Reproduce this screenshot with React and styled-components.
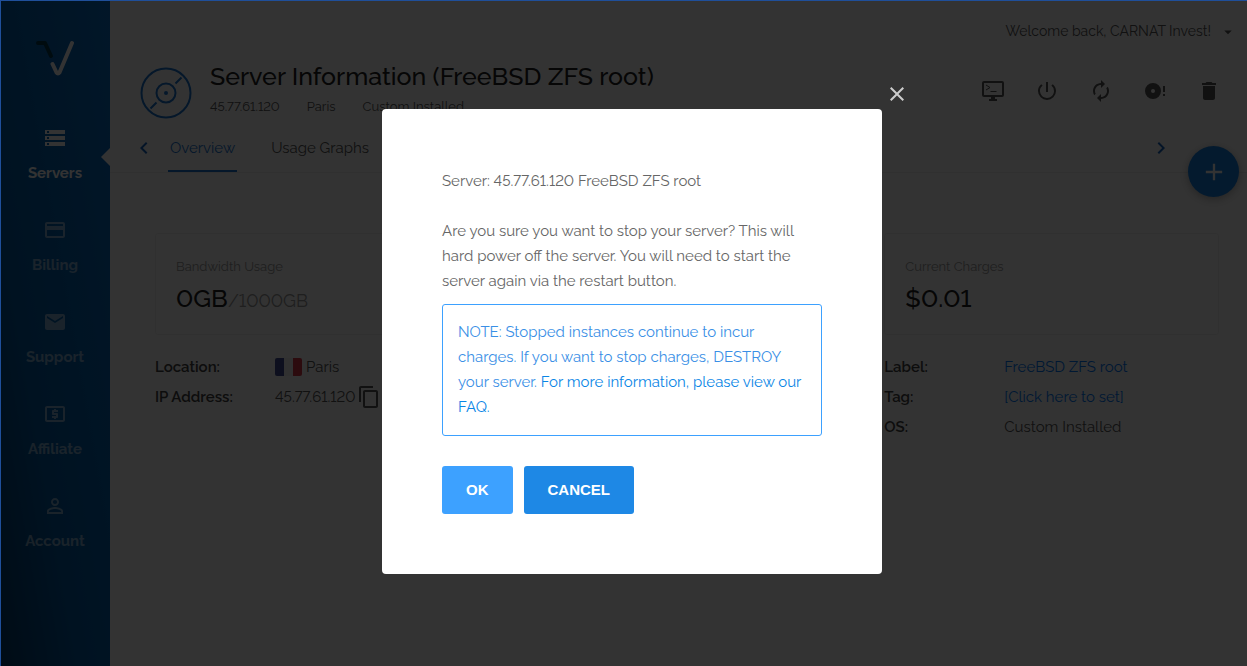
import React, { useState } from "react";
import styled, { createGlobalStyle } from "styled-components";
import {
  MdAdd,
  MdArrowDropDown,
  MdAutorenew,
  MdChevronLeft,
  MdChevronRight,
  MdClose,
  MdContentCopy,
  MdDelete,
  MdLocalAtm,
  MdMail,
  MdPayment,
  MdPersonOutline,
  MdPowerSettingsNew,
  MdStorage,
} from "react-icons/md";

const navItems = [
  { label: "Servers", icon: MdStorage },
  { label: "Billing", icon: MdPayment },
  { label: "Support", icon: MdMail },
  { label: "Affiliate", icon: MdLocalAtm },
  { label: "Account", icon: MdPersonOutline },
];

function Logo() {
  return (
    <svg width="38" height="36" viewBox="0 0 38 36" fill="none">
      <path
        d="M2 3h7l6 13"
        stroke="#00384d"
        strokeWidth="4"
        strokeLinecap="round"
        strokeLinejoin="round"
      />
      <path
        d="M16.500 24l4 8.500q1.500 2 3 0L36 3"
        stroke="#fff"
        strokeWidth="4"
        strokeLinecap="round"
        strokeLinejoin="round"
      />
    </svg>
  );
}

function DiscIcon() {
  return (
    <svg
      width="52"
      height="52"
      viewBox="0 0 52 52"
      fill="none"
      stroke="#1976d2"
      strokeWidth="2"
    >
      <circle cx="26" cy="26" r="24.500" />
      <circle cx="26" cy="26" r="9.500" />
      <circle cx="26" cy="26" r="2" fill="#1976d2" stroke="none" />
      <path d="M35.500 16.500l6-6M16.500 35.500l-6 6" />
    </svg>
  );
}

function ConsoleIcon() {
  return (
    <svg width="24" height="24" viewBox="0 0 24 24" fill="none">
      <rect
        x="2"
        y="3"
        width="20"
        height="14"
        rx="1"
        stroke="currentColor"
        strokeWidth="2"
      />
      <path d="M10 17h4v3h2v2H8v-2h2z" fill="currentColor" />
      <path d="M5 6l4 2.500-4 2.500M9.500 12.500h6" stroke="currentColor" />
    </svg>
  );
}

function ReinstallIcon() {
  return (
    <svg width="24" height="24" viewBox="0 0 24 24" fill="currentColor">
      <path
        fillRule="evenodd"
        d="M10 4a8 8 0 1 0 0 16 8 8 0 0 0 0-16zm0 6a2 2 0 1 1 0 4 2 2 0 0 1 0-4z"
      />
      <path d="M20 7h2v6h-2zM20 15h2v2h-2z" />
    </svg>
  );
}

function FlagFrance() {
  return (
    <Flag viewBox="0 0 27 18" width="27" height="18">
      <path d="M0 0h9v18H0z" fill="#414d98" />
      <path d="M9 0h9v18H9z" fill="#f4f4f4" />
      <path d="M18 0h9v18h-9z" fill="#d93a48" />
    </Flag>
  );
}

function Sidebar() {
  return (
    <SidebarWrapper>
      <LogoLink href="#" aria-label="Home">
        <Logo />
      </LogoLink>
      {navItems.map(({ label, icon: Icon }, index) => (
        <NavLink href="#" key={label} $active={index === 0}>
          <Icon size={24} />
          {label}
        </NavLink>
      ))}
    </SidebarWrapper>
  );
}

function StopServerModal({ onClose }) {
  return (
    <Overlay>
      <Modal role="dialog" aria-modal="true">
        <CloseButton aria-label="Close" onClick={onClose}>
          <MdClose size={24} />
        </CloseButton>
        <p>Server: 45.77.61.120 FreeBSD ZFS root</p>
        <p>
          Are you sure you want to stop your server? This will hard power off
          the server. You will need to start the server again via the restart
          button.
        </p>
        <Note>
          NOTE: Stopped instances continue to incur charges. If you want to stop
          charges, DESTROY your server.{" "}
          <a href="#">For more information, please view our FAQ.</a>
        </Note>
        <ModalActions>
          <ModalButton $light onClick={onClose}>
            OK
          </ModalButton>
          <ModalButton onClick={onClose}>CANCEL</ModalButton>
        </ModalActions>
      </Modal>
    </Overlay>
  );
}

function App() {
  const [modal, setModal] = useState(true);

  return (
    <>
      <GlobalStyle />
      <Page>
        <Sidebar />
        <Main>
          <Header>
            <UserButton>
              Welcome back, CARNAT Invest!
              <MdArrowDropDown size={18} />
            </UserButton>
            <TitleRow>
              <DiscIcon />
              <TitleText>
                <h1>Server Information (FreeBSD ZFS root)</h1>
                <Meta>
                  <span>45.77.61.120</span>
                  <span>Paris</span>
                  <span>Custom Installed</span>
                </Meta>
              </TitleText>
              <Actions>
                <IconButton aria-label="View console">
                  <ConsoleIcon />
                </IconButton>
                <IconButton
                  aria-label="Stop server"
                  onClick={() => setModal(true)}
                >
                  <MdPowerSettingsNew size={24} />
                </IconButton>
                <IconButton aria-label="Restart server">
                  <MdAutorenew size={24} />
                </IconButton>
                <IconButton aria-label="Reinstall server">
                  <ReinstallIcon />
                </IconButton>
                <IconButton aria-label="Destroy server">
                  <MdDelete size={24} />
                </IconButton>
              </Actions>
            </TitleRow>
            <Tabs>
              <TabArrow aria-label="Previous tabs">
                <MdChevronLeft size={24} />
              </TabArrow>
              <TabList>
                <Tab href="#" $active>
                  Overview
                </Tab>
                <Tab href="#">Usage Graphs</Tab>
              </TabList>
              <TabArrow aria-label="Next tabs">
                <MdChevronRight size={24} />
              </TabArrow>
            </Tabs>
            <AddButton aria-label="Deploy server">
              <MdAdd size={28} />
            </AddButton>
          </Header>
          <Content>
            <Card>
              <CardLabel>Bandwidth Usage</CardLabel>
              <CardValue>
                0GB<small>/1000GB</small>
              </CardValue>
            </Card>
            <Card />
            <Card>
              <CardLabel>Current Charges</CardLabel>
              <CardValue>$0.01</CardValue>
            </Card>
            <Details>
              <dt>Location:</dt>
              <dd>
                <FlagFrance /> Paris
              </dd>
              <dt>IP Address:</dt>
              <dd>
                45.77.61.120
                <CopyButton aria-label="Copy IP address">
                  <MdContentCopy size={24} />
                </CopyButton>
              </dd>
            </Details>
            <Details />
            <Details>
              <dt>Label:</dt>
              <dd>
                <a href="#">FreeBSD ZFS root</a>
              </dd>
              <dt>Tag:</dt>
              <dd>
                <a href="#">[Click here to set]</a>
              </dd>
              <dt>OS:</dt>
              <dd>Custom Installed</dd>
            </Details>
          </Content>
        </Main>
      </Page>
      {modal && <StopServerModal onClose={() => setModal(false)} />}
    </>
  );
}

export default App;

const GlobalStyle = createGlobalStyle`
  * {
    box-sizing: border-box;
  }
  body {
    margin: 0;
    background: #fff;
    color: #555;
    font-family: Raleway, Lato, sans-serif;
    font-size: 15px;
    font-variant-numeric: lining-nums;
    line-height: 25px;
  }
  h1, p, dl, dd {
    margin: 0;
  }
  a {
    color: #007bfc;
    text-decoration: none;
  }
  button {
    border: none;
    padding: 0;
    background: none;
    color: inherit;
    font: inherit;
    cursor: pointer;
  }
  svg {
    display: block;
    flex-shrink: 0;
  }
`;

const Page = styled.div`
  display: flex;
  min-height: 100vh;
`;

const SidebarWrapper = styled.nav`
  display: flex;
  flex-direction: column;
  width: 110px;
  flex-shrink: 0;
  padding-top: 40px;
  background: linear-gradient(80deg, #003a6b, #005ba5 35%, #0a70c8);
`;

const LogoLink = styled.a`
  display: flex;
  justify-content: center;
  margin-bottom: 34px;
`;

const NavLink = styled.a`
  position: relative;
  display: flex;
  flex-direction: column;
  align-items: center;
  gap: 11px;
  height: 92px;
  padding-top: 16px;
  color: ${(props) => (props.$active ? "#fff" : "rgba(255, 255, 255, 0.5)")};
  font-weight: 700;

  &::after {
    content: "";
    display: ${(props) => (props.$active ? "block" : "none")};
    position: absolute;
    right: 0;
    top: 38px;
    border: 9px solid transparent;
    border-right-color: #fff;
    border-left: none;
  }
`;

const Main = styled.main`
  flex: 1;
  min-width: 0;
  background: #fdfdfd;
`;

const Header = styled.header`
  position: relative;
  padding: 19px 26px 0 30px;
  border-bottom: 1px solid #eee;
  background: #fff;
`;

const UserButton = styled.button`
  display: flex;
  align-items: center;
  gap: 8px;
  margin: 0 -16px 0 auto;
  font-size: 14px;
`;

const TitleRow = styled.div`
  display: flex;
  align-items: flex-end;
  gap: 18px;
  padding: 16px 0 5px;

  h1 {
    padding-bottom: 2px;
    color: #222;
    font-size: 25px;
    font-weight: 500;
    line-height: 32px;
  }
`;

const TitleText = styled.div`
  flex: 1;
`;

const Meta = styled.div`
  display: flex;
  gap: 27px;
  font-size: 13px;
`;

const Actions = styled.div`
  display: flex;
  gap: 30px;
  padding-bottom: 16px;
  color: #555;
`;

const IconButton = styled.button`
  display: flex;
`;

const CopyButton = styled(IconButton)`
  margin-left: -3px;
`;

const Tabs = styled.div`
  display: flex;
  align-items: center;
  height: 48px;
  padding-right: 44px;
`;

const TabArrow = styled.button`
  display: flex;
  width: 28px;
  margin-left: -8px;
  color: #1565c0;
`;

const TabList = styled.div`
  display: flex;
  flex: 1;
  align-self: stretch;
  gap: 32px;
  padding-left: 8px;
`;

const Tab = styled.a`
  display: flex;
  align-items: center;
  padding: 2px 2px 0;
  border-bottom: 2px solid
    ${(props) => (props.$active ? "#1976d2" : "transparent")};
  color: ${(props) => (props.$active ? "#1976d2" : "#555")};
`;

const AddButton = styled.button`
  position: absolute;
  right: 8px;
  bottom: -25px;
  display: flex;
  align-items: center;
  justify-content: center;
  width: 51px;
  height: 51px;
  border-radius: 50%;
  background: #1481e6;
  box-shadow: 0 2px 8px rgba(0, 0, 0, 0.3);
  color: #fff;
`;

const Content = styled.div`
  display: grid;
  grid-template-columns: repeat(3, 1fr);
  gap: 17px 30px;
  padding: 60px 28px 30px 45px;
`;

const Card = styled.section`
  min-height: 102px;
  padding: 20px 20px 17px;
  border: 1px solid #f0f0f0;
  border-radius: 3px;
  background: #fff;
`;

const CardLabel = styled.div`
  color: #999;
  font-size: 13px;
`;

const CardValue = styled.div`
  color: #222;
  font-size: 25px;
  font-weight: 500;
  line-height: 38px;

  small {
    color: #999;
    font-size: 18px;
    font-weight: 400;
    line-height: 1;
  }
`;

const Details = styled.dl`
  display: grid;
  grid-template-columns: 120px 1fr;
  align-content: start;
  line-height: 30px;

  dt {
    color: #444;
    font-weight: 600;
  }
  dd {
    display: flex;
    align-items: center;
    gap: 4px;
    height: 30px;
  }
`;

const Flag = styled.svg`
  border-radius: 2px;
`;

const Overlay = styled.div`
  position: fixed;
  inset: 0;
  display: flex;
  align-items: center;
  justify-content: center;
  padding: 16px 0 0 16px;
  border: solid #1f4f9a;
  border-width: 1px 0 0 1px;
  background: rgba(0, 0, 0, 0.8);
`;

const Modal = styled.div`
  position: relative;
  width: 500px;
  padding: 60px;
  border-radius: 4px;
  background: #fff;
  color: #666;

  p + p {
    margin-top: 25px;
  }
`;

const CloseButton = styled.button`
  position: absolute;
  left: 100%;
  top: -27px;
  margin-left: 3px;
  color: #ccc;
`;

const Note = styled.div`
  margin-top: 10px;
  padding: 15px;
  border: 1px solid #3da1ff;
  border-radius: 3px;
  color: #3a8fe6;

  a {
    color: #0a86e6;
  }
`;

const ModalActions = styled.div`
  display: flex;
  gap: 11px;
  margin-top: 30px;
`;

const ModalButton = styled.button`
  height: 48px;
  padding: 0 24px 2px;
  border-radius: 3px;
  background: ${(props) => (props.$light ? "#3da1ff" : "#1e88e5")};
  color: #fff;
  font: 700 15px "Liberation Sans", Arial, sans-serif;
`;
